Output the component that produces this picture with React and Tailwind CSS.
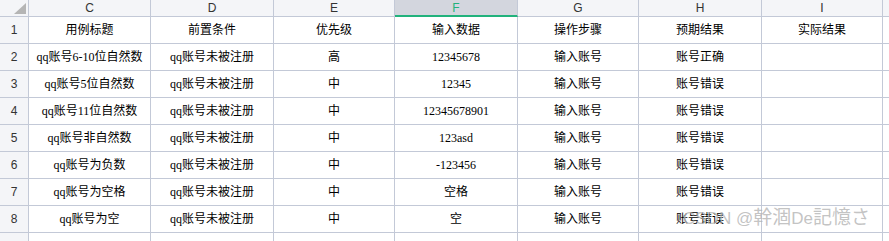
import React from "react";

const cols = ["C", "D", "E", "F", "G", "H", "I"];
const rows = [
  ["用例标题", "前置条件", "优先级", "输入数据", "操作步骤", "预期结果", "实际结果"],
  ["qq账号6-10位自然数", "qq账号未被注册", "高", "12345678", "输入账号", "账号正确", ""],
  ["qq账号5位自然数", "qq账号未被注册", "中", "12345", "输入账号", "账号错误", ""],
  ["qq账号11位自然数", "qq账号未被注册", "中", "12345678901", "输入账号", "账号错误", ""],
  ["qq账号非自然数", "qq账号未被注册", "中", "123asd", "输入账号", "账号错误", ""],
  ["qq账号为负数", "qq账号未被注册", "中", "-123456", "输入账号", "账号错误", ""],
  ["qq账号为空格", "qq账号未被注册", "中", "空格", "输入账号", "账号错误", ""],
  ["qq账号为空", "qq账号未被注册", "中", "空", "输入账号", "账号错误", ""],
];

const cellFont = {
  fontFamily: '"Liberation Serif", "Noto Sans CJK SC", serif',
};

export default function App() {
  return (
    <div className="relative w-[889px] h-[241px] overflow-hidden bg-white">
      <div className="grid grid-cols-[29px_122px_123px_121px_123px_121px_123px_121px_1fr] grid-rows-[17px_repeat(9,27px)]">
        {/* corner */}
        <div className="relative bg-[#f4f5f8] border-r border-b border-[#c3c9d7]">
          <svg className="absolute left-[14px] top-[3px]" width="12" height="11" viewBox="0 0 12 11">
            <polygon points="12,0 12,11 0,11" fill="#b5b5b5" />
          </svg>
        </div>
        {cols.map((c) => (
          <div
            key={c}
            className={
              c === "F"
                ? "relative flex items-center justify-center bg-[#d3d6de] border-r border-b-2 border-r-[#c3c9d7] border-b-[#21b27c] text-[12px] text-[#21b27c] font-['Liberation_Sans',sans-serif] leading-none"
                : "flex items-center justify-center bg-[#f4f5f8] border-r border-b border-[#c3c9d7] text-[12px] text-[#333] font-['Liberation_Sans',sans-serif] leading-none"
            }
          >
            {c}
          </div>
        ))}
        <div className="bg-[#f4f5f8] border-b border-[#c3c9d7]" />
        {rows.map((r, i) => (
          <React.Fragment key={i}>
            <div className="flex items-center justify-center bg-[#f4f5f8] border-r border-b border-[#c3c9d7] text-[12px] text-[#333] font-['Liberation_Sans',sans-serif]">
              {i + 1}
            </div>
            {r.map((v, j) => (
              <div
                key={j}
                className="flex items-center justify-center border-r border-b border-[#c3c9d7] text-[12px] text-black whitespace-nowrap overflow-hidden"
                style={cellFont}
              >
                {v}
              </div>
            ))}
            <div className="border-b border-[#c3c9d7]" />
          </React.Fragment>
        ))}
        <div className="bg-[#f4f5f8] border-r border-[#c3c9d7]" />
        {cols.map((c) => (
          <div key={c} className="border-r border-[#c3c9d7]" />
        ))}
        <div />
      </div>
      <div className="absolute left-[683px] top-[208px] flex items-baseline leading-none text-[#b4b4b4]/80 whitespace-nowrap font-['Liberation_Sans','Noto_Sans_CJK_JP',sans-serif] pointer-events-none">
        <span className="text-[17px]">CSDN @</span>
        <span className="text-[19px]">幹涸</span>
        <span className="text-[17px]">De</span>
        <span className="text-[19px]">記憶さ</span>
      </div>
    </div>
  );
}
